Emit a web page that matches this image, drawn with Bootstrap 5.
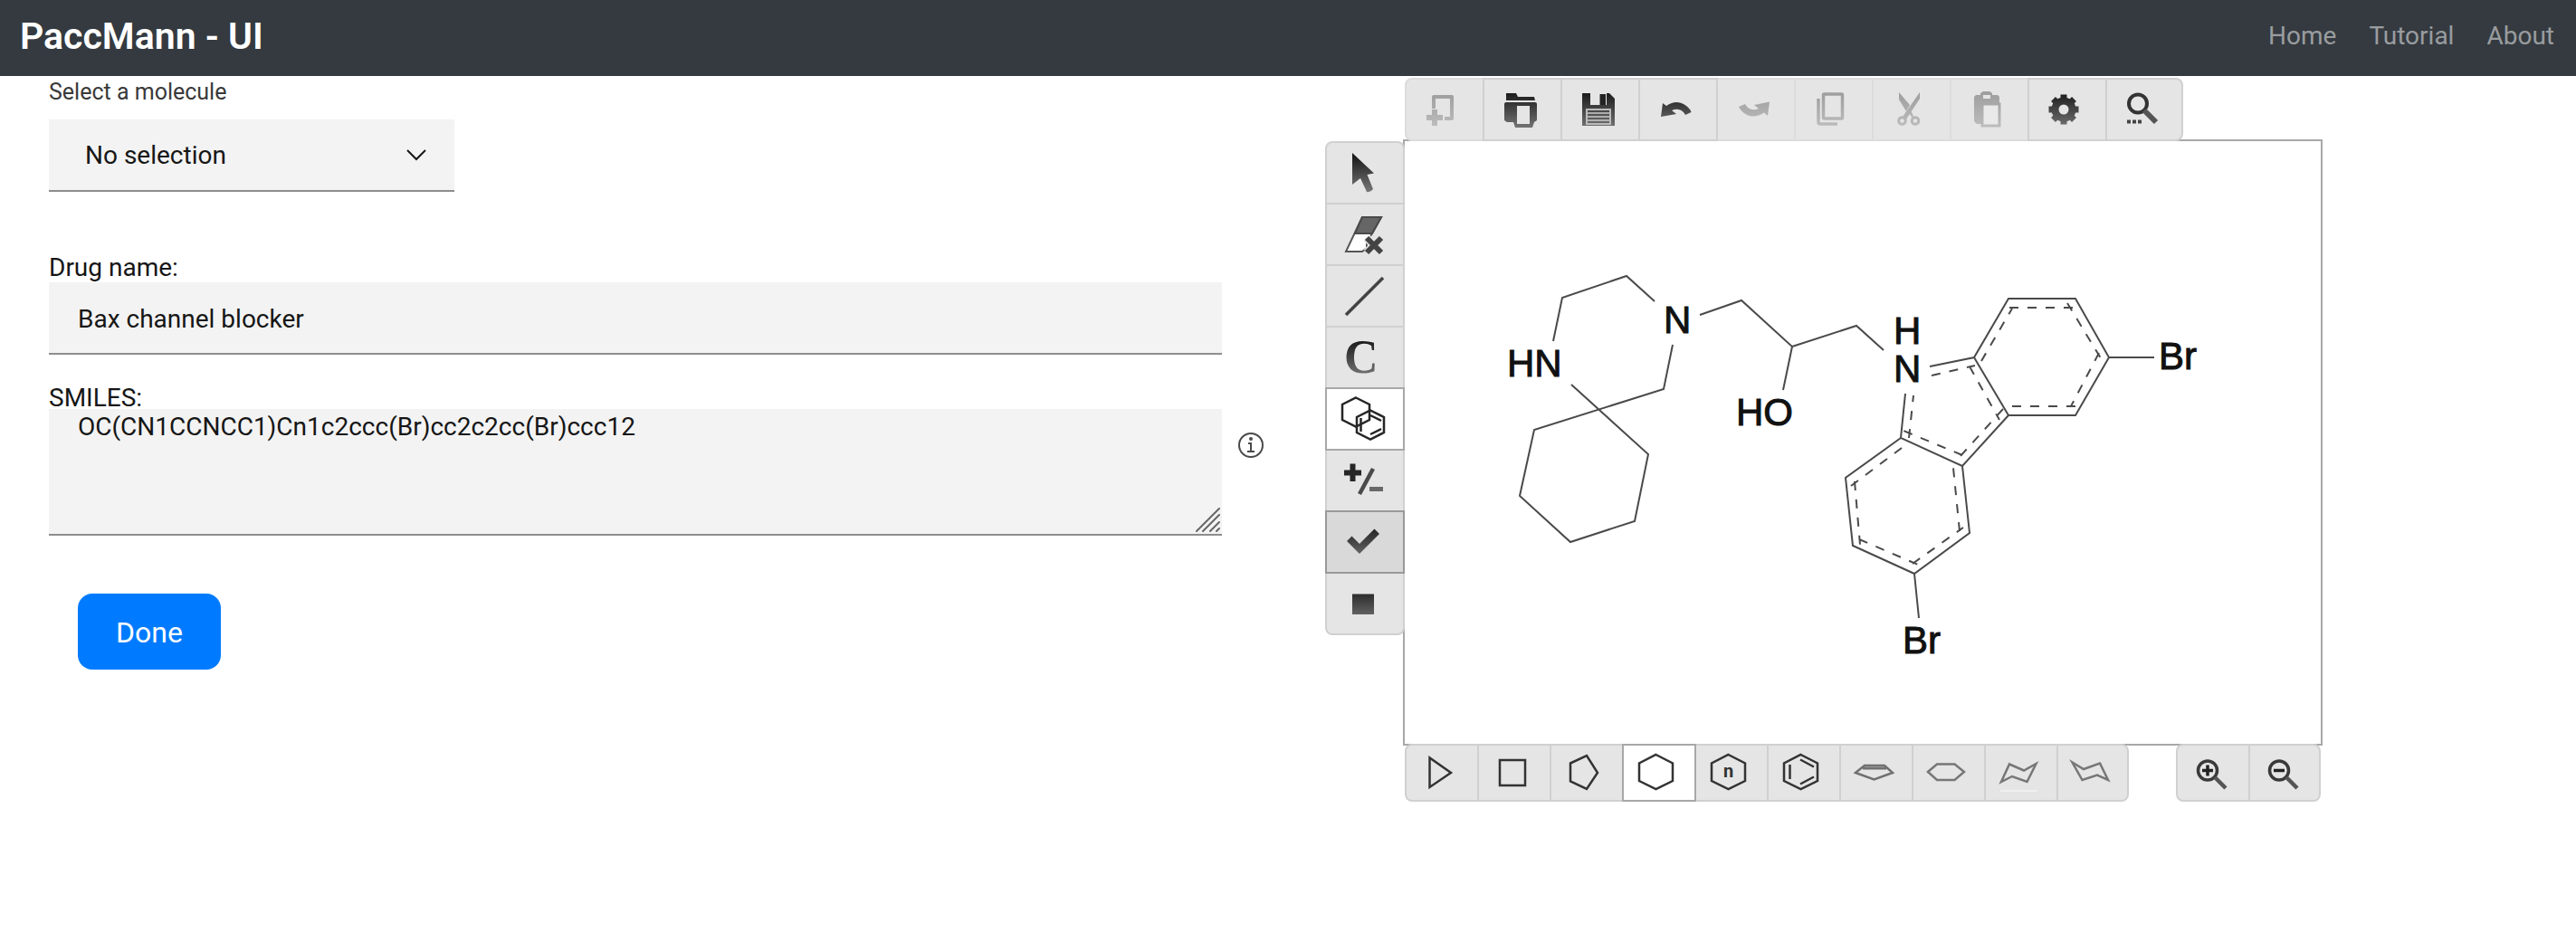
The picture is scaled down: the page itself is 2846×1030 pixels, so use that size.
<!DOCTYPE html>
<html lang="en">
<head>
<meta charset="utf-8">
<meta name="viewport" content="width=device-width, initial-scale=1">
<title>PaccMann - UI</title>
<link href="https://cdn.jsdelivr.net/npm/bootstrap@5.3.0/dist/css/bootstrap.min.css" rel="stylesheet">
<style>
  body { font-family: Roboto, "Liberation Sans", sans-serif; font-size: 28px; color: #161616; background: #fff; }
  .topnav { background: #343a40; height: 84px; padding: 0 24px 4px 22px; }
  .topnav .navbar-brand { font-size: 41px; font-weight: 600; line-height: 48px; color: #fff; }
  .topnav .nav-link { color: rgba(255,255,255,.5); line-height: 32px; }
  .topnav .navbar-nav { gap: 36px; }
  .form-pane { padding: 0 27px 0 54px; }
  .pick-label { font-size: 25px; line-height: 32px; color: #393939; padding-top: 2px; margin-bottom: 14px; }
  .field-label { line-height: 32px; }
  .field-label-tight { line-height: 24px; margin-top: 36px; }
  .name-row { margin-top: 68px; }
  .field-box, .field-box:focus { background-color: #f3f3f3; border: 0; border-bottom: 2px solid #8d8d8d; border-radius: 0; color: #161616; font-size: 28px; padding: 2px 32px 0; height: 80px; box-shadow: none; }
  .pick-box { width: 448px; max-width: 100%; padding-left: 40px; background-size: 24px 24px; background-position: right 30px center;
    background-image: url("data:image/svg+xml,%3Csvg xmlns='http://www.w3.org/2000/svg' viewBox='0 0 24 24'%3E%3Cpath d='M2 7L12 17L22 7' fill='none' stroke='%23161616' stroke-width='2'/%3E%3C/svg%3E"); }
  .smiles-box, .smiles-box:focus { height: 140px; line-height: 36px; resize: none; }
  .field-row { gap: 18px; }
  .field-row > .field-main { flex: 1 1 0; min-width: 0; }
  .row-end { width: 28px; flex: none; }
  .grip { right: 1px; bottom: 4px; width: 28px; height: 28px; pointer-events: none; }
  .info-btn { width: 28px; height: 28px; margin-top: 26px; line-height: 0; }
  .info-btn svg { width: 28px; height: 28px; display: block; }
  .done-btn { background: #007bff; color: #fff; font-size: 32px; line-height: 40px; padding: 23px 42px 21px; border: 0; border-radius: 16px; margin: 64px 0 0 32px; }
  .editor-pane { padding: 2px 12px 0 41px; }
  .editor { max-width: 1102px; }
  .tool { background: #e5e5e5; border: 2px solid #d0d0d0; padding: 0; flex: none; line-height: 0; position: relative; z-index: 1; }
  .tool svg { display: block; width: 100%; height: 100%; overflow: visible; }
  .tool:disabled { border-color: #dcdcdc; z-index: 0; }
  .tool.chosen { background: #fff; border-color: #a8a8a8; z-index: 2; }
  .tool.pressed { background: #d9d9d9; border-color: #999; z-index: 2; }
  .bar-left { width: 88px; margin: 70px -2px 0 0; position: relative; z-index: 1; }
  .bar-left .tool { width: 88px; height: 70px; margin-bottom: -2px; }
  .bar-left .tool:first-child { border-radius: 8px 8px 0 0; }
  .bar-left .tool:last-child { border-radius: 0 0 8px 8px; margin-bottom: 0; }
  .bar-top .tool { width: 88px; height: 70px; margin-right: -2px; }
  .bar-bottom .tool { width: 82px; height: 64px; margin-right: -2px; }
  .bar-top .tool:last-child { width: 86px; }
  .bar-bottom .tool:last-child { width: 80px; }
  .bar-top .tool:last-child, .bar-bottom .tool:last-child { margin-right: 0; border-radius: 0 8px 8px 0; }
  .bar-top .tool:first-child, .bar-bottom .tool:first-child { border-radius: 8px 0 0 8px; }
  .bar-top, .bar-bottom { position: relative; z-index: 1; }
  .bar-top { margin: 0 0 -2px 2px; }
  .bars-under { margin: -2px 2px 0 2px; }
  .sketch { border: 2px solid #a8a8a8; }
  .sketch svg { display: block; width: 100%; height: auto; }
  .sketch text { font-family: "Liberation Sans", Arial, sans-serif; font-size: 42px; fill: #111; stroke: #111; stroke-width: 1px; }
</style>
</head>
<body>
<nav class="navbar navbar-expand topnav d-flex justify-content-between">
  <a class="navbar-brand m-0 p-0" href="#">PaccMann - UI</a>
  <div class="navbar-nav">
    <a class="nav-link p-0" href="#">Home</a>
    <a class="nav-link p-0" href="#">Tutorial</a>
    <a class="nav-link p-0" href="#">About</a>
  </div>
</nav>

<svg width="0" height="0" class="position-absolute" aria-hidden="true">
  <defs>
    <linearGradient id="ink" gradientUnits="userSpaceOnUse" x1="0" y1="14" x2="0" y2="56"><stop offset="0" stop-color="#141414"/><stop offset="1" stop-color="#767676"/></linearGradient>
    <linearGradient id="faint" gradientUnits="userSpaceOnUse" x1="0" y1="14" x2="0" y2="56"><stop offset="0" stop-color="#9c9c9c"/><stop offset="1" stop-color="#bebebe"/></linearGradient>
  </defs>
</svg>

<main class="row g-0">
  <form class="col-6 form-pane" onsubmit="return false">
    <label class="pick-label d-block" for="molecule">Select a molecule</label>
    <select class="form-select field-box pick-box" id="molecule"><option>No selection</option></select>

    <div class="d-flex field-row name-row">
      <div class="field-main">
        <label class="field-label d-block" for="drug">Drug name:</label>
        <input class="form-control field-box" id="drug" type="text" value="Bax channel blocker">
      </div>
      <div class="row-end"></div>
    </div>

    <label class="field-label-tight d-block" for="smiles">SMILES:</label>
    <div class="d-flex field-row">
      <div class="field-main position-relative">
        <textarea class="form-control field-box smiles-box" id="smiles" spellcheck="false">OC(CN1CCNCC1)Cn1c2ccc(Br)cc2c2cc(Br)ccc12</textarea>
        <svg class="grip position-absolute" viewBox="0 0 28 28" fill="none" stroke="#666" stroke-width="2" stroke-linecap="round" aria-hidden="true"><path d="M1 27L26 2M8 27L26 9M16 27L26 17M23 27L26 24"/></svg>
      </div>
      <button type="button" class="info-btn row-end border-0 bg-transparent p-0" aria-label="About SMILES">
        <svg viewBox="0 0 28 28" fill="none" stroke="#4a4a4a" stroke-width="2"><circle cx="14" cy="14" r="13"/><path d="M11 12H14V21M10 21H18"/><circle cx="14" cy="7" r="2" fill="#4a4a4a" stroke="none"/></svg>
      </button>
    </div>

    <button type="submit" class="btn done-btn">Done</button>
  </form>

  <section class="col-6 editor-pane">
    <div class="editor d-flex align-items-start">
      <div class="bar-left d-flex flex-column flex-shrink-0" role="toolbar" aria-label="Drawing tools">
        <button class="tool" aria-label="Select"><svg viewBox="2 2 84 66"><path fill="url(#ink)" d="M30 13L54 35.500L46.500 37L53 53Q50 57 46 56L39 41L30 48Z"/></svg></button>
        <button class="tool" aria-label="Erase"><svg viewBox="2 2 84 66"><path fill="#fff" stroke="#555" stroke-width="2" d="M41 16H62L52 34L46 43V50L41 54H23Z"/><path fill="#666" stroke="#4a4a4a" stroke-width="2" d="M41 16H62L52 34H33Z"/><path stroke="#e5e5e5" stroke-width="9" d="M46 39L62 55M62 39L46 55"/><path stroke="#444" stroke-width="6" d="M46 39L62 55M62 39L46 55"/></svg></button>
        <button class="tool" aria-label="Bond"><svg viewBox="2 2 84 66"><path stroke="#444" stroke-width="3.500" d="M23 56L64 15"/></svg></button>
        <button class="tool" aria-label="Atom"><svg viewBox="2 2 84 66"><text x="21" y="52" font-family="Liberation Serif, serif" font-weight="700" font-size="52" fill="url(#ink)">C</text></svg></button>
        <button class="tool chosen" aria-label="Rings"><svg viewBox="2 2 84 66" fill="none" stroke="#262626" stroke-width="2.500"><path d="M34 11.500L49 19V36L34 43.500L19 36V19Z"/><path d="M50 25.500L65 33V50L50 57.500L35 50V33ZM39.500 34V49M50 31L62 37M50 52L62 46"/></svg></button>
        <button class="tool" aria-label="Charge"><svg viewBox="2 2 84 66"><path stroke="#262626" stroke-width="6" d="M21 26.500H40M30.500 16.500V36"/><path stroke="#4a4a4a" stroke-width="4.500" d="M53 22L38 50"/><path stroke="#686868" stroke-width="5" d="M49 44.500H64"/></svg></button>
        <button class="tool pressed" aria-label="Check"><svg viewBox="2 2 84 66"><path fill="url(#ink)" d="M24 34L29.500 28.500L38 37L54.500 20.500L60 26L38 48Z"/></svg></button>
        <button class="tool" aria-label="Stop"><svg viewBox="2 2 84 66"><path fill="url(#ink)" d="M30 24.500H54V47H30Z"/></svg></button>
      </div>

      <div class="flex-grow-1">
        <div class="bar-top d-flex" role="toolbar" aria-label="File tools">
          <button class="tool" disabled aria-label="New"><svg viewBox="2 2 84 66" fill="none" stroke="url(#faint)"><path stroke-width="4" stroke-linejoin="round" d="M32 34V21H52V45H44"/><path stroke-width="6" d="M24 44H42M33 35V53"/></svg></button>
          <button class="tool" aria-label="Open"><svg viewBox="2 2 84 66"><path fill="url(#ink)" d="M26 17H37L39 21H57L58 25H26Z"/><path fill="url(#ink)" d="M26 27H58Q60 27 60 29V47L57 49L55 55H36L34 49H27L24 47V29Q24 27 26 27Z"/><path fill="#e5e5e5" d="M38 31H52V51H38Z"/></svg></button>
          <button class="tool" aria-label="Save"><svg viewBox="2 2 84 66"><path fill="url(#ink)" d="M24 17H54L60 23V53H24Z"/><path fill="#e5e5e5" d="M33 16H51V30H33Z"/><path fill="#222" d="M43.500 18H50V30H43.500Z"/><rect x="29" y="35" width="26" height="16" fill="none" stroke="#bbb" stroke-width="2"/><path stroke="#ccc" stroke-width="1.500" d="M30 39H54M30 43H54M30 47H54"/></svg></button>
          <button class="tool" aria-label="Undo"><svg viewBox="2 2 84 66"><path fill="url(#ink)" d="M25 43L27 28L31 31Q41 24 50 29Q57 33 58.500 38L52 41Q47 32 37 36L42 40Z"/></svg></button>
          <button class="tool" disabled aria-label="Redo"><svg viewBox="2 2 84 66"><path fill="url(#faint)" d="M59 26.500L57 42L53 38.500Q43 45 34 41Q27 37 25 32L32 29Q37 38 47 34L42 30Z"/></svg></button>
          <button class="tool" disabled aria-label="Copy"><svg viewBox="2 2 84 66" fill="none" stroke="url(#faint)" stroke-width="3.500"><rect x="32.500" y="18" width="21" height="27" rx="1"/><path d="M27 23V49Q27 51 29 51H48"/></svg></button>
          <button class="tool" disabled aria-label="Cut"><svg viewBox="2 2 84 66" fill="none" stroke="url(#faint)"><path fill="url(#faint)" stroke="none" d="M30 16L42 30L38 37L30 24Z"/><path fill="url(#faint)" stroke="none" d="M53 16V23L38 46L34 43Z"/><path stroke-width="2.500" d="M42 37L45 43"/><circle cx="33.500" cy="47.500" r="3.800" stroke-width="3"/><circle cx="48" cy="47.500" r="3.800" stroke-width="3"/></svg></button>
          <button class="tool" disabled aria-label="Paste"><svg viewBox="2 2 84 66"><path fill="url(#faint)" d="M29 19H34V17L37 15H44L47 17V19H53L55 21V29H36V51H30L27 48V21Z"/><path fill="#e5e5e5" d="M37 19H45V23H37Z"/><rect x="36" y="29" width="19" height="24" fill="#e9e9e9" stroke="url(#faint)" stroke-width="3"/></svg></button>
          <button class="tool" aria-label="Settings"><svg viewBox="2 2 84 66" fill="none" stroke="url(#ink)"><circle cx="40" cy="35" r="9.500" stroke-width="8"/><path stroke-width="7" d="M40 18.500V24M40 46V51.500M23.500 35H29M51 35H56.500M28.500 23.500L32 27M48 43L51.500 46.500M28.500 46.500L32 43M48 27L51.500 23.500"/></svg></button>
          <button class="tool" aria-label="Search"><svg viewBox="2 2 82 66" fill="none"><circle cx="36" cy="28.500" r="10" stroke="#333" stroke-width="4"/><path stroke="#555" stroke-width="6" d="M43 36L56 49"/><path stroke="#444" stroke-width="4" d="M24 48.500H28M30 48.500H34M36 48.500H40"/></svg></button>
        </div>

        <div class="sketch">
          <svg viewBox="0 0 1012 666" fill="none" stroke="#4a4a4a" stroke-width="2" role="img" aria-label="Molecule structure">
            <path d="M164 221L174 173L245 149L276 177M184 269L269 346L254 420L183 443L127 392L143 319L286 274L296 225M326 192L372 176L428 227L418 275M428 227L499 204L529 231"/>
            <path d="M580 249L629 239L667 174H741L778 239L741 303H667L629 239M828 239H778M553 279L548 328L616 359L667 303M548 328L487 372L495 447L563 478L624 433L616 359M563 478L568 527"/>
            <path stroke-dasharray="10 10" d="M738 184H666M732 179L769 240M767 234L736 293M741 293H671M637 243L671 185"/>
            <path stroke-dasharray="10 10" d="M582 259L630 248M624 249L657 308M661 296L613 349M616 347L551 320M557 328L562 281"/>
            <path stroke-dasharray="10 10" d="M549 339L493 381M497 376L503 446M502 440L567 468M561 467L617 427M613 431L606 361"/>
            <g>
              <text x="286" y="212">N</text>
              <text x="113" y="260">HN</text>
              <text x="366" y="314">HO</text>
              <text x="540" y="224">H</text>
              <text x="540" y="266">N</text>
              <text x="833" y="252">Br</text>
              <text x="550" y="566">Br</text>
            </g>
          </svg>
        </div>

        <div class="bars-under d-flex justify-content-between">
          <div class="bar-bottom d-flex" role="toolbar" aria-label="Templates">
            <button class="tool" aria-label="Cyclopropane"><svg viewBox="2 2 78 60" fill="none" stroke="#333" stroke-width="2.500"><path d="M27.500 15.500V48L51 32Z"/></svg></button>
            <button class="tool" aria-label="Cyclobutane"><svg viewBox="2 2 78 60" fill="none" stroke="#333" stroke-width="2.500"><path d="M25 18H53V46H25Z"/></svg></button>
            <button class="tool" aria-label="Cyclopentane"><svg viewBox="2 2 78 60" fill="none" stroke="#333" stroke-width="2.500"><path d="M23 21.500L41 13L53 32L41 50L23 41.500Z"/></svg></button>
            <button class="tool chosen" aria-label="Cyclohexane"><svg viewBox="2 2 78 60" fill="none" stroke="#333" stroke-width="2.500"><path d="M37.500 12L56 21.500V41L37.500 50L19 41V21.500Z"/></svg></button>
            <button class="tool" aria-label="Ring of n atoms"><svg viewBox="2 2 78 60" fill="none" stroke="#333" stroke-width="2.500"><path d="M37.500 12L56 21.500V41L37.500 50L19 41V21.500Z"/><text x="32" y="37" font-family="Roboto, sans-serif" font-weight="700" font-size="20" fill="#333" stroke="none">n</text></svg></button>
            <button class="tool" aria-label="Benzene"><svg viewBox="2 2 78 60" fill="none" stroke="#333" stroke-width="2.500"><path d="M37.500 12L56 21.500V41L37.500 50L19 41V21.500ZM25.500 23V39M37 17.500L52 25.500M37 44.500L52 36.500"/></svg></button>
            <button class="tool" aria-label="Flat pentagon"><svg viewBox="2 2 78 60" fill="none" stroke="#707070" stroke-width="2.500"><path d="M18 32L28 24H50L59 32L38.500 39.500Z"/><path stroke-width="3" d="M26 27H52"/></svg></button>
            <button class="tool" aria-label="Flat hexagon"><svg viewBox="2 2 78 60" fill="none" stroke="#777" stroke-width="2.500"><path d="M18 31L28 22.500H47.500L58 31L47.500 40H28Z"/></svg></button>
            <button class="tool" aria-label="Boat form"><svg viewBox="2 2 78 60" fill="none" stroke="#777" stroke-width="2.500"><path d="M57.500 22L44 29.500L28 22.500L19 42L31 36L47.500 42Z"/><path stroke="#f0f0f0" stroke-width="2" d="M18 52H58"/></svg></button>
            <button class="tool" aria-label="Chair form"><svg viewBox="2 2 76 60" fill="none" stroke="#777" stroke-width="2.500"><path d="M17.500 20.500L30 28L48 21.500L57 40L45 34.500L28.500 40Z"/></svg></button>
          </div>
          <div class="bar-bottom d-flex" role="toolbar" aria-label="Zoom">
            <button class="tool" aria-label="Zoom in"><svg viewBox="2 2 78 60" fill="none"><circle cx="35" cy="29.500" r="10.500" stroke="#3a3a3a" stroke-width="3.500"/><path stroke="#555" stroke-width="4.500" d="M43 37L55 49"/><path stroke="#222" stroke-width="3.500" d="M29 29.500H41M35 23.500V35.500"/></svg></button>
            <button class="tool" aria-label="Zoom out"><svg viewBox="2 2 76 60" fill="none"><circle cx="34" cy="29.500" r="10.500" stroke="#3a3a3a" stroke-width="3.500"/><path stroke="#555" stroke-width="4.500" d="M42 37L54 49"/><path stroke="#222" stroke-width="3.500" d="M28 29.500H40"/></svg></button>
          </div>
        </div>
      </div>
    </div>
  </section>
</main>
<script src="https://cdn.jsdelivr.net/npm/bootstrap@5.3.0/dist/js/bootstrap.bundle.min.js"></script>
</body>
</html>
